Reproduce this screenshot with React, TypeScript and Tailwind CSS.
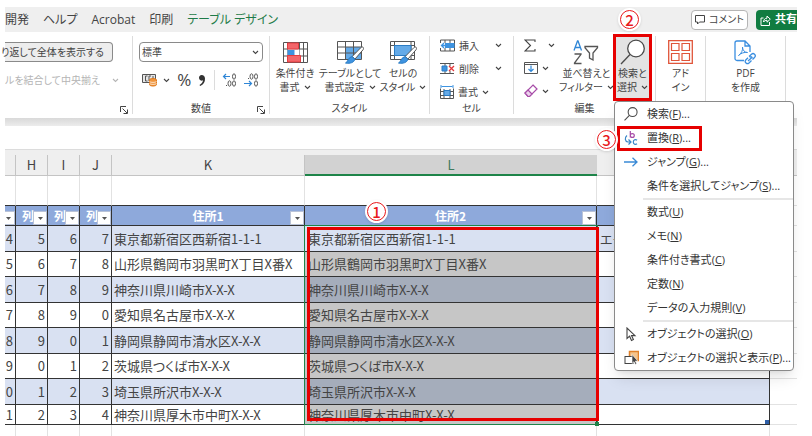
import type { ReactNode } from "react";

const menuItems = [
  { label: "検索", accessKey: "F", more: true, icon: <SearchIcon size={14} /> },
  { label: "置換", accessKey: "R", more: true, icon: <ReplaceIcon />, marked: true },
  { label: "ジャンプ", accessKey: "G", more: true, icon: <ArrowIcon /> },
  { label: "条件を選択してジャンプ", accessKey: "S", more: true, divider: true },
  { label: "数式", accessKey: "U" },
  { label: "メモ", accessKey: "N" },
  { label: "条件付き書式", accessKey: "C" },
  { label: "定数", accessKey: "N" },
  { label: "データの入力規則", accessKey: "V", divider: true },
  { label: "オブジェクトの選択", accessKey: "O", icon: <CursorIcon /> },
  { label: "オブジェクトの選択と表示", accessKey: "P", more: true, icon: <PaneIcon /> },
];

const rows = [
  { numbers: [4, 5, 6, 7], address: "東京都新宿区西新宿1-1-1", building: "エク" },
  { numbers: [5, 6, 7, 8], address: "山形県鶴岡市羽黒町X丁目X番X" },
  { numbers: [6, 7, 8, 9], address: "神奈川県川崎市X-X-X" },
  { numbers: [7, 8, 9, 0], address: "愛知県名古屋市X-X-X" },
  { numbers: [8, 9, 0, 1], address: "静岡県静岡市清水区X-X-X" },
  { numbers: [9, 0, 1, 2], address: "茨城県つくば市X-X-X" },
  { numbers: [0, 1, 2, 3], address: "埼玉県所沢市X-X-X" },
  { numbers: [1, 2, 3, 4], address: "神奈川県厚木市中町X-X-X" },
];

/* Icons */

function Chevron({ color = "#444" }: { color?: string }) {
  return (
    <svg width="7" height="5" viewBox="0 0 7 5" fill="none" stroke={color} strokeWidth="1.1" className="shrink-0">
      <path d="M1 1l2.5 2.4L6 1" />
    </svg>
  );
}

function SearchIcon({ size }: { size: number }) {
  return (
    <svg width={size} height={size} viewBox="0 0 26 26" fill="none" stroke="#4a4a4a" strokeWidth={size > 20 ? 1.3 : 2}>
      <circle cx="16" cy="9.5" r="8.3" fill="#fff" />
      <path d="M10 15.5L1 25" />
    </svg>
  );
}

function ReplaceIcon() {
  return (
    <svg width="15" height="17" viewBox="0 0 15 17" fill="none" strokeWidth="1.2">
      <path d="M6.3 1v6.5M6.3 5.5c0-2.6 4-2.6 4 0s-4 2.6-4 0" stroke="#a74ca8" />
      <path d="M3 5.5C.5 7.500.8 11.500 4 12h2.500M4.500 9.500L7 12l-2.500 2.500" stroke="#3a86c8" />
      <path d="M13 10.2c-1.500-1.300-3.700-.4-3.700 1.800s2.200 3.100 3.700 1.800" stroke="#3a86c8" />
    </svg>
  );
}

function ArrowIcon() {
  return (
    <svg width="14" height="10" viewBox="0 0 14 10" fill="none" stroke="#3a8ad6" strokeWidth="1.3">
      <path d="M0 5h13M8.500.8L13 5 8.500 9.200" />
    </svg>
  );
}

function CursorIcon() {
  return (
    <svg width="12" height="15" viewBox="0 0 12 15" fill="#fff" stroke="#444" strokeWidth="1.1">
      <path d="M2 1v10.500l2.600-2.300L6.500 13.500l1.900-.9-1.900-4H10z" />
    </svg>
  );
}

function PaneIcon() {
  return (
    <svg width="15" height="16" viewBox="0 0 15 16" fill="none">
      <rect x="5.5" y="1.5" width="9" height="9" fill="#f5c48c" stroke="#e0812a" strokeWidth="1.5" />
      <rect x="1" y="6.5" width="8" height="7" fill="#fff" stroke="#444" />
      <path d="M8 4.500v9l2-1.800 1.400 2.800 1.300-.7-1.300-2.700h2.500z" fill="#444" stroke="#fff" strokeWidth=".6" />
    </svg>
  );
}

function ConditionalIcon() {
  return (
    <svg width="25" height="21" viewBox="0 0 25 21" fill="none">
      <path d="M.5.5h24v20H.5zM.5 7h24M.5 14h24M4.500.5v20M16.500.5v20M20.500.5v20" stroke="#555" />
      <path d="M4.500 7.500h12v6h-12z" fill="#fff" />
      <path d="M4.500 1h11v6h-11zM4.500 13.500h13v6.500h-13z" fill="#f2666a" stroke="#e53b40" />
      <path d="M4.500 8h7v5h-7z" fill="#3e93e0" />
    </svg>
  );
}

function Brush() {
  return (
    <>
      <path d="M26 7.200c.9.800.6 1.700 0 2.600L18 19l-2.800-2.500 8.600-8.800c.7-.8 1.500-1 2.200-.5z" fill="#fff" stroke="#555" />
      <path d="M15 16.600l3 2.700c-1 3-4.500 4.700-9.500 3.700 2.800-1 2.500-5.800 6.500-6.400z" fill="#3e93e0" stroke="#2b7cc4" />
    </>
  );
}

function TableFormatIcon() {
  return (
    <svg width="27" height="25" viewBox="0 0 27 25" fill="none">
      <path d="M8.500 7h16v12h-16z" fill="#64aae8" />
      <path d="M.5 1.500h24v18H.5zM.5 7h24M.5 13h24M8.500 1.500v18M16.500 1.500v18" stroke="#555" />
      <Brush />
    </svg>
  );
}

function CellStyleIcon() {
  return (
    <svg width="27" height="25" viewBox="0 0 27 25" fill="none">
      <path d="M.5 1.500h24v18H.5zM4.500 1.500v18M21 1.500v18M.5 5.500h24M.5 15.500h24" stroke="#555" />
      <path d="M4.500 5.500H21v10H4.500z" fill="#64aae8" stroke="#2b7cc4" />
      <Brush />
    </svg>
  );
}

function InsertIcon() {
  return (
    <svg width="15" height="13" viewBox="0 0 15 13" fill="none">
      <path d="M.5 1v11h14V1zM5 1v11M10 1v11M.5 4.500h14M.5 8.500h14" stroke="#555" />
      <path d="M5 4h9.500v5H5z" fill="#3e93e0" />
      <path d="M0 4h5v5H0z" fill="#fff" />
      <path d="M8 6.500H1.500M4 4L1.500 6.500 4 9" stroke="#3e93e0" strokeWidth="1.3" />
    </svg>
  );
}

function DeleteIcon() {
  return (
    <svg width="15" height="13" viewBox="0 0 15 13" fill="none">
      <path d="M0 1.500h14M0 11.500h14M5 1v3M10 1v3M5 9v3M10 9v3" stroke="#555" />
      <path d="M2 4h5v5H2z" fill="#3e93e0" stroke="#2b7cc4" />
      <path d="M9 4l5 5M14 4L9 9" stroke="#e5383b" strokeWidth="1.3" />
    </svg>
  );
}

function FormatIcon() {
  return (
    <svg width="14" height="14" viewBox="0 0 14 14" fill="none">
      <path d="M.5 3.500v10h13v-10M.5 6.500h13M.5 10.500h13M4 4v9M10 4v9" stroke="#555" />
      <path d="M4 5.500h6v5H4z" fill="#64aae8" stroke="#2b7cc4" />
      <path d="M1 0v3M13 0v3M1.500 1.500h11" stroke="#3e93e0" />
    </svg>
  );
}

function SigmaIcon() {
  return (
    <svg width="12" height="13" viewBox="0 0 12 13" fill="none" stroke="#444" strokeWidth="1.1">
      <path d="M11 3V1H1l5.500 5.500L1 12h10v-2" />
    </svg>
  );
}

function FillIcon() {
  return (
    <svg width="14" height="12" viewBox="0 0 14 12" fill="none">
      <path d="M.5.5h13v11H.5zM.5 2.500h13" stroke="#555" />
      <path d="M7 3.500v6M4.500 7L7 9.500 9.500 7" stroke="#2f86d6" strokeWidth="1.2" />
    </svg>
  );
}

function EraserIcon() {
  return (
    <svg width="14" height="14" viewBox="0 0 14 14" fill="none" stroke="#a74ca8" strokeWidth="1.2">
      <path d="M9 1l4 4-7.500 7.500H4L1 9z" />
      <path d="M4 6l4 4-2.500 2.500H4L1 9z" fill="#ecd3ec" />
    </svg>
  );
}

function SortFilterIcon() {
  return (
    <svg width="26" height="25" viewBox="0 0 26 25" fill="none" strokeWidth="1.3">
      <path d="M1 10.500L4.500 1h.5l3.500 9.500M2.200 7.500h5.200" stroke="#2f86d6" />
      <path d="M1.500 14H8v.4L1.500 23v.5h7" stroke="#555" />
      <path d="M12 6.500h12.500v1.200L20 13v7l-3.500-2v-5L12 7.700z" stroke="#555" />
    </svg>
  );
}

function AddinIcon() {
  return (
    <svg width="25" height="24" viewBox="0 0 25 24" fill="none" stroke="#e0553a">
      <path d="M.7.7h23.600v22.600H.7z" strokeWidth="1.3" />
      <path d="M3.500 3.500h7.500v7H3.500zM14 3.500h7.500v7H14zM3.500 13.500h7.500v7H3.500zM14 13.500h7.500v7H14z" strokeWidth="1.2" />
    </svg>
  );
}

function PdfIcon() {
  return (
    <svg width="23" height="25" viewBox="0 0 23 25" fill="none" stroke="#3a8ee0" strokeWidth="1.3">
      <path d="M10 20.500H3a2 2 0 01-2-2V3a2 2 0 012-2h8l5 5v6M11 1v5h5" />
      <path d="M4.500 15.500c3-2 4.500-5.500 4-8.500M8.500 7c0 3 2 5.500 5 5.500-3-.5-6.500.5-9 3" strokeWidth="1" />
      <path d="M15 16.500l2.500-2.300c2-1.800 5 .8 3.200 3L18.500 19.500M18 17l-2.500-.2M17.500 20.500L15 23c-2 1.800-5-.8-3.200-3l2.200-2.300M14 21l4.500-4" />
    </svg>
  );
}

function CurrencyIcon() {
  return (
    <svg width="15" height="14" viewBox="0 0 15 14" fill="none">
      <path d="M.5 1.500h13v8H.5z" fill="#e6e6e6" stroke="#555" />
      <path d="M5.500 3h-2v5h2M9 3H7v5h2M11 3v2" stroke="#555" />
      <path d="M7.500 7c0-2 7-2 7 0v4.500c0 2-7 2-7 0z" fill="#f0953c" stroke="#e07a1c" />
      <path d="M7.500 8.500c1 1.200 6 1.200 7 0M7.500 10.500c1 1.200 6 1.200 7 0" stroke="#fff" strokeWidth=".7" />
    </svg>
  );
}

function CommaIcon() {
  return (
    <svg width="8" height="13" viewBox="0 0 8 13" fill="#333">
      <path d="M3.700 1A3 3 0 001 4a2.700 2.700 0 004 2.300C4.800 8.500 3.500 10 1.500 11l.7 1C5.500 10.500 7.200 8 7 4.500 6.900 2.300 5.600 1 3.700 1z" />
    </svg>
  );
}

// Zeros with an arrow: left adds a decimal place, right removes one
function DecimalIcon({ direction }: { direction: "left" | "right" }) {
  const isLeft = direction === "left";
  return (
    <svg width="15" height="14" viewBox="0 0 15 14" fill="none" stroke="#555">
      <ellipse cx="12" cy="3.5" rx="1.5" ry="2.7" />
      {isLeft ? <ellipse cx="7.5" cy="10.5" rx="1.5" ry="2.7" /> : <ellipse cx="7.5" cy="3.5" rx="1.5" ry="2.7" />}
      <ellipse cx="12" cy="10.5" rx="1.5" ry="2.7" />
      <path d={isLeft ? "M4 12.500h1" : "M4 5.500h1"} />
      <path
        d={isLeft ? "M8 3.500H1.500M4 1L1.500 3.500 4 6" : "M0 10.500h7M5 8l2.500 2.500L5 13"}
        stroke="#2f86d6"
        strokeWidth="1.2"
      />
    </svg>
  );
}

function LauncherIcon() {
  return (
    <svg width="8" height="8" viewBox="0 0 8 8" fill="none" stroke="#444">
      <path d="M.5 6V.5H6M2.500 2.500L7 7M7.500 3.500v4h-4" />
    </svg>
  );
}

function ShareIcon() {
  return (
    <svg width="11" height="12" viewBox="0 0 11 12" fill="none" stroke="#fff">
      <path d="M3.500 4H1v7.500h8.500V8" />
      <path d="M3.500 8c.2-2.500 1.500-3.800 3.500-3.800V2l3.300 3.200L7 8.200V6.300C5.500 6.300 4.500 6.800 3.500 8z" />
    </svg>
  );
}

function CommentIcon() {
  return (
    <svg width="10" height="10" viewBox="0 0 10 10" fill="none" stroke="#444">
      <path d="M.5.5h9v6.500h-5L2.500 9V7h-2z" />
    </svg>
  );
}

/* Ribbon parts */

function Badge({ number, className }: { number: number; className: string }) {
  return (
    <span className={`absolute z-30 flex size-[23px] items-center justify-center rounded-full bg-white shadow ${className}`}>
      <span className="flex size-[19px] items-center justify-center rounded-full border border-[#e8191c] font-['Noto_Sans_CJK_JP',sans-serif] text-[15px] leading-4 font-medium text-[#e8191c]">
        {number}
      </span>
    </span>
  );
}

function Group({ label, className, launcher, children }: { label?: string; className: string; launcher?: boolean; children: ReactNode }) {
  return (
    <section className={`relative flex shrink-0 flex-col justify-between border-r border-[#dcdcdc] ${className}`}>
      {children}
      <div className="flex h-3 items-center justify-center">{label}</div>
      {launcher ? (
        <button aria-label="詳細設定" className="absolute right-1 bottom-0">
          <LauncherIcon />
        </button>
      ) : null}
    </section>
  );
}

function BigButton({ icon, lines, chevron, className = "" }: { icon: ReactNode; lines: string[]; chevron?: boolean; className?: string }) {
  return (
    <button className={`flex flex-col items-center whitespace-nowrap leading-[14px] ${className}`}>
      <span className="flex h-7 items-center">{icon}</span>
      <span>{lines[0]}</span>
      <span className="flex items-center gap-1">
        {lines[1]}
        {chevron ? <Chevron /> : null}
      </span>
    </button>
  );
}

function FindMenu() {
  return (
    <div className="absolute top-[65px] left-0 z-20 w-[180px] rounded border border-[#8a8a8a] bg-white text-[11px] text-[#333] shadow-lg">
      {menuItems.map((item) => (
        <div key={item.label} className="relative">
          <button className="flex h-6 w-full items-center whitespace-nowrap">
            <span className="flex w-8 shrink-0 items-center justify-center">{item.icon}</span>
            <span>
              {item.label}(<u>{item.accessKey}</u>){item.more ? "..." : ""}
            </span>
          </button>
          {item.divider ? <hr className="ml-7 border-t-2 border-[#e6e6e6]" /> : null}
          {item.marked ? (
            <>
              <span className="absolute top-0 left-0.5 h-[25px] w-[85px] border-3 border-[#e60000]" />
              <Badge number={3} className="top-0.5 -left-5" />
            </>
          ) : null}
        </div>
      ))}
    </div>
  );
}

function Ribbon() {
  return (
    <div className="flex h-[86px] bg-white py-1 text-[10px] leading-3 text-[#444]">
      <Group className="w-32" launcher>
        <div className="flex flex-col gap-2 pt-1.5">
          <button className="flex h-5 w-[108px] items-center justify-end rounded-r border border-l-0 border-[#8a8a8a] bg-[#ededed] pr-2 whitespace-nowrap">
            り返して全体を表示する
          </button>
          <button className="flex h-5 w-[114px] items-center justify-between whitespace-nowrap text-[#b5b5b5]" disabled>
            ルを結合して中央揃え
            <Chevron color="#b5b5b5" />
          </button>
        </div>
      </Group>

      <Group className="w-[137px] px-1.5" label="数値" launcher>
        <div className="flex flex-col gap-2 pt-1.5">
          <div className="relative">
            <select aria-label="表示形式" className="h-5 w-full appearance-none rounded border border-[#8a8a8a] bg-white pl-0.5">
              <option>標準</option>
            </select>
            <span className="pointer-events-none absolute top-2 right-1">
              <Chevron />
            </span>
          </div>
          <div className="flex h-5 items-center justify-between pr-1 pl-[3px]">
            <button aria-label="通貨" className="flex items-center gap-1.5">
              <CurrencyIcon />
              <Chevron />
            </button>
            <button className="text-[17px]">%</button>
            <button aria-label="桁区切り">
              <CommaIcon />
            </button>
            <span className="h-5 border-l border-[#dcdcdc]" />
            <button aria-label="小数点以下を増やす">
              <DecimalIcon direction="left" />
            </button>
            <button aria-label="小数点以下を減らす">
              <DecimalIcon direction="right" />
            </button>
          </div>
        </div>
      </Group>

      <Group className="w-[160px]" label="スタイル">
        <div className="grid grid-cols-[50px_60px_46px] pt-0.5">
          <BigButton icon={<ConditionalIcon />} lines={["条件付き", "書式"]} chevron />
          <BigButton icon={<TableFormatIcon />} lines={["テーブルとして", "書式設定"]} chevron />
          <BigButton icon={<CellStyleIcon />} lines={["セルの", "スタイル"]} chevron />
        </div>
      </Group>

      <Group className="w-[84px]" label="セル">
        <div className="flex flex-col gap-2.5 px-2.5 pt-[3px]">
          <button className="flex items-center gap-1">
            <InsertIcon />
            <span className="w-8 text-left">挿入</span>
            <Chevron />
          </button>
          <button className="flex items-center gap-1">
            <DeleteIcon />
            <span className="w-8 text-left">削除</span>
            <Chevron />
          </button>
          <button className="flex items-center gap-1">
            <FormatIcon />
            <span>書式</span>
            <Chevron />
          </button>
        </div>
      </Group>

      <Group className="w-[142px]" label="編集">
        <div className="flex">
          <div className="flex flex-col gap-2.5 pt-[3px] pl-2.5">
            <button aria-label="合計" className="flex items-center gap-3">
              <SigmaIcon />
              <Chevron />
            </button>
            <button aria-label="フィル" className="flex items-center gap-1">
              <FillIcon />
              <Chevron />
            </button>
            <button aria-label="クリア" className="flex items-center gap-1">
              <EraserIcon />
              <Chevron />
            </button>
          </div>
          <BigButton icon={<SortFilterIcon />} lines={["並べ替えと", "フィルター"]} chevron className="ml-1 pt-0.5" />
        </div>
        <div className="absolute top-0 right-1">
          <BigButton
            icon={<SearchIcon size={26} />}
            lines={["検索と", "選択"]}
            chevron
            className="h-16 w-[37px] bg-[#e3e3e3] pt-0.5"
          />
          <span className="pointer-events-none absolute -inset-x-px -top-0.5 h-[67px] border-3 border-[#e60000]" />
          <Badge number={2} className="-top-7 left-1" />
          <FindMenu />
        </div>
      </Group>

      <Group className="w-[50px]">
        <BigButton icon={<AddinIcon />} lines={["アド", "イン"]} className="pt-0.5" />
      </Group>
      <Group className="w-20">
        <BigButton icon={<PdfIcon />} lines={["PDF", "を作成"]} className="pt-0.5" />
      </Group>
    </div>
  );
}

function TabBar() {
  return (
    <header className="flex h-[25px] items-center justify-between bg-[#efefef] text-xs text-[#444]">
      <nav className="flex items-center gap-[14px] whitespace-nowrap">
        <a href="#dev">開発</a>
        <a href="#help">ヘルプ</a>
        <a href="#acrobat">Acrobat</a>
        <a href="#print">印刷</a>
        <a href="#design" className="text-[#1e7b48]">テーブル デザイン</a>
      </nav>
      <div className="flex gap-2 whitespace-nowrap">
        <button className="flex h-5 w-[57px] items-center justify-center gap-1 rounded border border-[#b5b5b5] bg-white text-[10px]">
          <CommentIcon />
          コメント
        </button>
        <button className="flex h-5 w-[41px] items-center gap-1 rounded-l bg-[#107c41] pl-1 text-[11px] font-bold text-white">
          <ShareIcon />
          共有
        </button>
      </div>
    </header>
  );
}

/* Sheet */

function FilterButton() {
  return (
    <button aria-label="フィルター" className="absolute right-0 bottom-0 flex size-[14px] items-center justify-center border border-[#b9c3d8] bg-white">
      <svg width="5" height="3" viewBox="0 0 5 3" fill="#555">
        <path d="M0 0h5L2.500 3z" />
      </svg>
    </button>
  );
}

function Sheet() {
  const columns = ["", "H", "I", "J", "K", "L", "", ""];
  const headings = ["", "列", "列", "列", "住所1", "住所2", ""];

  return (
    <div className="relative font-['Noto_Sans_CJK_JP',sans-serif]">
      <table className="w-full table-fixed border-separate border-spacing-0 overflow-hidden text-[13px] leading-4 whitespace-nowrap text-[#444]">
        <colgroup>
          <col className="w-[11px]" />
          <col className="w-8" />
          <col className="w-8" />
          <col className="w-8" />
          <col className="w-[193px]" />
          <col />
          <col className="w-[173px]" />
          <col className="w-[27px]" />
        </colgroup>
        <thead>
          <tr className="h-[21px]">
            {columns.map((column, index) => (
              <th
                key={index}
                className={
                  column === "L"
                    ? "border-b-2 border-[#1e8449] bg-[#d2d2d2] p-0 font-normal text-[#3f7a5c]"
                    : "border-r border-b border-[#c4c4c4] bg-[#efefef] p-0 font-normal last:border-r-0"
                }
              >
                {column}
              </th>
            ))}
          </tr>
          <tr className="h-[30px]">
            {columns.map((column, index) => (
              <td key={index} className="border-r border-b border-r-[#e2e2e2] border-b-[#333] last:border-r-0 last:border-b-[#e2e2e2]" />
            ))}
          </tr>
          <tr className="h-5 text-xs leading-4 font-bold text-white">
            {headings.map((heading, index) => (
              <th key={index} className="relative overflow-hidden border-r border-b border-[#333] bg-[#8ea9db] p-0">
                <span className={heading === "列" ? "block pl-1.5 text-left" : ""}>{heading}</span>
                <FilterButton />
              </th>
            ))}
            <td className="border-b border-[#e2e2e2]" />
          </tr>
        </thead>
        <tbody>
          {rows.map((row, index) => {
            const striped = index % 2 === 0;
            const isLast = index === rows.length - 1;
            const height = isLast ? "h-5" : striped ? "h-[26px]" : "h-[25px]";
            const selected = index === 0 ? "bg-[#d9e1f2]" : striped ? "bg-[#a5adbb]" : "bg-[#c6c6c6]";
            return (
              <tr key={row.address} className={`${height} ${striped ? "bg-[#d9e1f2]" : "bg-white"}`}>
                {row.numbers.map((number, column) => (
                  <td key={column} className="border-r border-b border-[#333] p-0 pr-0.5 text-right">
                    {number}
                  </td>
                ))}
                <td className="border-r border-b border-[#333] p-0 pl-0.5">{row.address}</td>
                <td className={`border-r border-b border-[#333] p-0 pl-[3px] ${selected}`}>{row.address}</td>
                <td className="relative overflow-hidden border-r border-b border-[#333] p-0 pl-[3px]">
                  {row.building}
                  {isLast ? <span className="absolute right-0 bottom-0 size-1 bg-[#2f5fa8]" /> : null}
                </td>
                <td className="border-b border-[#e2e2e2] bg-white" />
              </tr>
            );
          })}
          <tr className="h-[11px]">
            {columns.map((column, index) => (
              <td key={index} className="border-r border-[#e2e2e2] last:border-r-0" />
            ))}
          </tr>
        </tbody>
      </table>

      {/* Selected range and its outline */}
      <div className="pointer-events-none absolute top-[70px] right-[199px] bottom-[11px] left-[299px] border border-[#1e8449]">
        <span className="absolute -right-0.5 -bottom-0.5 size-1 bg-[#1e8449]" />
        <div className="absolute top-px -right-0.5 bottom-[3px] left-0.5 border-3 border-[#e60000]" />
      </div>
      <Badge number={1} className="top-[45px] left-[360px]" />
    </div>
  );
}

export default function App() {
  return (
    <main className="overflow-hidden bg-white pt-[7px] pr-[15px] pl-[5px] font-['Open_Sans','Noto_Sans_CJK_JP',sans-serif] [font-feature-settings:'palt']">
      <TabBar />
      <Ribbon />
      <div className="h-2 bg-linear-to-b from-[#d9d9d9] to-[#ececec]" />
      <div className="h-[23px]" />
      <div className="h-1.5 border-t border-[#dcdcdc] bg-[#efefef]" />
      <Sheet />
    </main>
  );
}
